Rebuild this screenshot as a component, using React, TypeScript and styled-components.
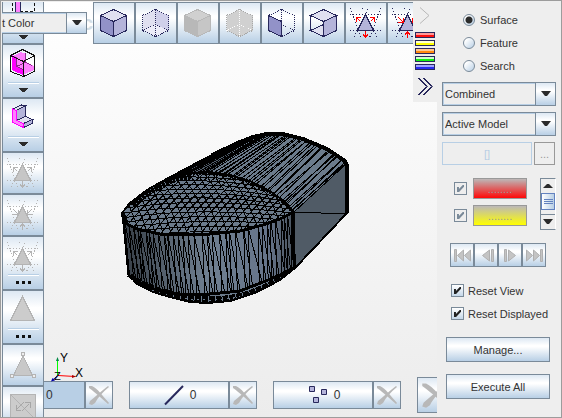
import React, { useState } from "react";
import styled, { createGlobalStyle, css } from "styled-components";

const line = "#7a8a99";
const navy = "#28285c";
const soft = "#b8cfe5";
const ocean = "linear-gradient(#dde8f3 0%, #ffffff 32%, #ffffff 38%, #b8cfe5 100%)";

const GlobalStyle = createGlobalStyle`
  *, *::before, *::after { box-sizing: border-box; }
  body { margin: 0; }
  body, button, input, select {
    font-family: "Liberation Sans", Arial, sans-serif;
    font-size: 11px;
    color: #333;
  }
  svg { display: block; flex: none; }
`;

const Window = styled.div`
  display: grid;
  grid-template-columns: auto minmax(0, 1fr) 124px;
  grid-template-rows: minmax(0, 1fr);
  position: relative;
  height: 100vh;
  border: 1px solid #9c9c9c;
  padding: 1px 0 0 1px;
  background: #eee;
  overflow: hidden;
`;

const SideBar = styled.div`
  display: flex;
  flex-direction: column;
  overflow: hidden;
`;

const ToolButton = styled.button<{ $cut?: boolean }>`
  display: flex;
  align-items: flex-end;
  flex: none;
  width: 42px;
  padding: 0;
  border: 1px solid ${line};
  border-radius: 0;
  background: ${ocean};
  shape-rendering: crispEdges;
  ${(p) => p.$cut && css`border-top: 0;`}
`;

const Viewport = styled.main`
  display: grid;
  grid-template: minmax(0, 1fr) / minmax(0, 1fr);
  position: relative;
  background: linear-gradient(#ffffff, #ececec);
  overflow: hidden;
`;

const Scene = styled.div`
  grid-area: 1 / 1;
  padding: 128px 0 0 74px;
`;

const Overlay = styled.div`
  grid-area: 1 / 1;
  position: relative;
  display: flex;
  flex-direction: column;
  justify-content: space-between;
`;

const TopRow = styled.div`
  display: flex;
  align-items: flex-start;
`;

const Ghost = styled.span`
  width: 49px;
  padding-top: 10px;
  text-align: right;
  font-size: 20px;
  line-height: 23px;
  font-weight: bold;
  color: #d3dee6;
`;

const ToolRow = styled.div`
  display: flex;
  flex: 1;
  min-width: 0;
  overflow: hidden;
`;

const Strip = styled.div`
  display: flex;
  flex-direction: column;
  flex: none;
  width: 24px;
  height: 100px;
  background: #eee;
`;

const StripButton = styled.button`
  padding: 0;
  border: 0;
  background: none;
`;

const CountRow = styled.div`
  display: flex;
  align-items: center;
  gap: 16px;
  height: 36px;
  margin-bottom: 4px;
  overflow: hidden;
`;

const CountGroup = styled.div`
  display: flex;
  flex: none;
`;

const CountButton = styled.button<{ $active?: boolean }>`
  display: flex;
  align-items: center;
  justify-content: center;
  gap: 4px;
  width: 100px;
  height: 28px;
  padding: 0;
  border: 1px solid ${line};
  background: ${ocean};
  font-size: 12px;
  ${(p) =>
    p.$active &&
    css`
      width: 41px;
      justify-content: flex-start;
      padding-left: 2px;
      border-left: 0;
      background: ${soft};
    `}
`;

const ClearButton = styled.button<{ $large?: boolean }>`
  display: flex;
  align-items: center;
  justify-content: center;
  width: ${(p) => (p.$large ? 36 : 28)}px;
  height: ${(p) => (p.$large ? 36 : 28)}px;
  padding: 0;
  border: 1px solid ${line};
  background: ${ocean};
`;

const Triad = styled.svg`
  position: absolute;
  left: 6px;
  bottom: 30px;
`;

const FloatingCombo = styled.div`
  position: absolute;
  left: 1px;
  top: 11px;
  width: 85px;
`;

const ComboBox = styled.div<{ $flush?: boolean }>`
  display: grid;
  grid-template-columns: minmax(0, 1fr) 20px;
  height: ${(p) => (p.$flush ? 22 : 24)}px;
  border: 1px solid ${line};
  ${(p) => p.$flush && css`border-left: 0;`}
`;

const Select = styled.select<{ $flush?: boolean }>`
  grid-area: 1 / 1 / 2 / 3;
  appearance: none;
  width: 100%;
  height: 100%;
  padding: 0 20px 0 ${(p) => (p.$flush ? 0 : 1)}px;
  border: 1px solid ${soft};
  border-radius: 0;
  background: #eee;
  ${(p) => p.$flush && css`border-left: 0;`}
`;

const ComboArrow = styled.span`
  grid-area: 1 / 2;
  display: flex;
  align-items: center;
  justify-content: center;
  border-left: 1px solid ${line};
  background: ${ocean};
  pointer-events: none;
`;

const Panel = styled.aside`
  display: flex;
  flex-direction: column;
  padding: 6px 5px 0;
  background: #eee;
  overflow: hidden;
`;

const Choices = styled.div`
  display: flex;
  flex-direction: column;
  padding-left: 21px;
`;

const ChoiceRow = styled.label<{ $gap?: number }>`
  display: flex;
  align-items: center;
  gap: ${(p) => p.$gap ?? 4}px;
  height: 23px;
`;

const Radio = styled.input`
  appearance: none;
  width: 12px;
  height: 12px;
  margin: 0;
  border: 1px solid ${line};
  border-radius: 50%;
  background: linear-gradient(135deg, #fff 20%, #b8cfe5);
  &:checked {
    background: radial-gradient(circle, #2b2b2b 3px, transparent 4px), linear-gradient(135deg, #fff 20%, #b8cfe5);
  }
`;

const Tick = styled.input`
  appearance: none;
  display: grid;
  place-items: center;
  width: 13px;
  height: 13px;
  margin: 0;
  border: 1px solid ${line};
  background: linear-gradient(#fff, #c4d7e9);
  &:checked::before {
    content: "";
    width: 7px;
    height: 7px;
    background: #222;
    clip-path: polygon(0 30%, 28% 30%, 28% 58%, 82% 0, 100% 0, 100% 26%, 30% 100%, 0 100%);
  }
  &:disabled { background: #eee; }
  &:disabled::before { background: ${line}; }
`;

const Stack = styled.div<{ $top: number; $gap: number }>`
  display: flex;
  flex-direction: column;
  gap: ${(p) => p.$gap}px;
  margin-top: ${(p) => p.$top}px;
`;

const PickRow = styled.div`
  display: flex;
  gap: 2px;
  padding-right: 1px;
`;

const PickButton = styled.button<{ $narrow?: boolean }>`
  flex: ${(p) => (p.$narrow ? "0 0 21px" : "1")};
  height: 23px;
  padding: 0;
  border: 1px solid ${(p) => (p.$narrow ? "#999" : soft)};
  background: #eee;
  color: ${(p) => (p.$narrow ? "#999" : soft)};
`;

const ColorArea = styled.div`
  display: flex;
  justify-content: space-between;
  height: 52px;
  margin-top: 13px;
  padding: 0 0 0 12px;
`;

const ColorList = styled.div`
  display: flex;
  flex-direction: column;
  gap: 6px;
`;

const ColorRow = styled.div`
  display: flex;
  align-items: center;
  gap: 6px;
`;

const Swatch = styled.button<{ $color: string }>`
  width: 54px;
  height: 21px;
  padding: 0;
  border: 1px solid #999;
  background: linear-gradient(#bcb8b8, ${(p) => p.$color});
  color: #999;
`;

const Scroller = styled.div`
  display: flex;
  flex-direction: column;
  width: 16px;
  border: 1px solid ${line};
  border-right-color: #fff;
`;

const ScrollStep = styled.button`
  display: grid;
  place-items: center;
  flex: 1;
  padding: 0;
  border: 0;
  background: #eee;
  &:last-child { border-top: 1px solid ${line}; }
`;

const ScrollThumb = styled.div`
  display: grid;
  place-items: center;
  height: 17px;
  margin-bottom: 4px;
  border: 1px solid #6382bf;
  background: linear-gradient(90deg, #fff, #b8cfe5);
`;

const Transport = styled.div`
  display: flex;
  margin: 13px 0 0 8px;
`;

const TransportButton = styled.button`
  width: 24px;
  height: 24px;
  padding: 0;
  border: 1px solid ${line};
  background: ${ocean};
`;

const ResetList = styled.div`
  margin-top: 12px;
  padding-left: 9px;
  white-space: nowrap;
`;

const PushButton = styled.button`
  height: 25px;
  margin: 0 6px 0 4px;
  padding: 0;
  border: 1px solid ${line};
  background: ${ocean};
`;

const Arrow = ({ up }: { up?: boolean }) => (
  <svg width="10" height="6" viewBox="0 0 10 6">
    <path d={up ? "M0 5h10L6 1H4z" : "M0 0h10L6 5H4z"} fill="#2b2b2b" />
  </svg>
);

const hexagon = "M19.5 6.5 32.5 12.5V27.5L19.5 33.5 6.5 27.5V12.5Z";
const innerEdges = "M19.5 6.5V33.5M6.5 27.5 19.5 21.5 32.5 27.5";

function CubeIcon({ kind }: { kind: "solid" | "hidden" | "graySolid" | "grayHidden" | "left" | "open" }) {
  return (
    <svg width="40" height="40" viewBox="0 0 40 40" fill="none" stroke={navy}>
      {(kind === "solid" || kind === "graySolid") && (
        <g stroke={kind === "solid" ? navy : "#b8b8b8"} strokeLinejoin="round">
          <path d="M19.5 6.5 32.5 12.5 19.5 18.5 6.5 12.5Z" fill={kind === "solid" ? "#e0e0f0" : "#d0d0d0"} />
          <path d="M6.5 12.5 19.5 18.5V33.5L6.5 27.5Z" fill={kind === "solid" ? "#9292c8" : "#b8b8b8"} />
          <path d="M32.5 12.5 19.5 18.5V33.5L32.5 27.5Z" fill={kind === "solid" ? "#b4b4da" : "#c6c6c6"} />
        </g>
      )}
      {kind === "hidden" && (
        <g stroke="none">
          <path d={hexagon} fill="#e0e0f0" />
          <path d="M19.5 6.5 32.5 12.5V27.5L19.5 21.5Z" fill="#d0d0ea" />
          <path d="M6.5 27.5 19.5 21.5 32.5 27.5 19.5 33.5Z" fill="#ececf8" />
        </g>
      )}
      {kind === "grayHidden" && <path d={hexagon} fill="#d0d0d0" stroke="none" />}
      {kind === "hidden" && <path d={hexagon + innerEdges} strokeDasharray="1 1" />}
      {kind === "grayHidden" && (
        <g strokeDasharray="1 1">
          <path d={hexagon} stroke="#a8a8a8" />
          <path d={innerEdges} stroke="#fff" />
        </g>
      )}
      {kind === "left" && (
        <g>
          <path d={hexagon + innerEdges} strokeDasharray="1 1" />
          <path d="M6.5 12.5 19.5 18.5V33.5L6.5 27.5Z" fill="#9292c8" />
        </g>
      )}
      {kind === "open" && (
        <g>
          <path d="M6.5 27.5 19.5 21.5V33.5Z" fill="#e0e0f0" />
          <path d="M6.5 12.5 19.5 6.5 32.5 12.5 19.5 18.5Z" fill="#e0e0f0" />
          <path d="M32.5 12.5 19.5 18.5V33.5L32.5 27.5Z" fill="#b4b4da" />
          <path d="M6.5 12.5V27.5L19.5 33.5" />
        </g>
      )}
    </svg>
  );
}

function MenuMark({ dots }: { dots?: boolean }) {
  return (
    <g stroke="none">
      <path d="M5 37h31v1H5z" fill={soft} />
      <path d="M5 38h31v1H5z" fill="#fff" />
      {dots ? (
        <path d="M13 44h3v3h-3zM19 44h3v3h-3zM25 44h3v3h-3z" fill="#111" />
      ) : (
        <path d="M16 43h9l-3 4h-3z" fill="#2b2b2b" />
      )}
    </g>
  );
}

function RefineIcon({ inward, gray, menu }: { inward?: boolean; gray?: boolean; menu?: boolean }) {
  const ink = gray ? "#b4b4b4" : navy;
  const h = menu ? 52 : 40;
  return (
    <svg width="40" height={h} viewBox={`0 0 40 ${h}`} fill="none" stroke={ink}>
      <path
        d="M4 11.5H35M4 27.5H35M16.5 5 19.5 11.5 22.5 5M4.5 5 15.5 35M34.5 5 23.5 35M11.5 27.5 7.5 35M27.5 27.5 31.5 35"
        strokeDasharray="1 2"
      />
      <path d="M19.5 11.5 27.5 27.5H11.5Z" fill={gray ? "#c6c6c6" : "#b4b4da"} />
      <path
        d={
          inward
            ? "M10 14 15 19M15 15V19.5H10M29 14 24 19M24 15V19.5H29M19.5 35V29M17 31.5 19.5 29 22 31.5"
            : "M14.5 18.5 10.5 14.5M10.5 19V14.5H15M24.5 18.5 28.5 14.5M24 14.5H28.5V19M19.5 28V34M17 31.5 19.5 34 22 31.5"
        }
        stroke={gray ? "#b4b4b4" : "#f00"}
      />
      {menu && <MenuMark dots />}
    </svg>
  );
}

const BarIcon = () => (
  <svg width="40" height="41" viewBox="0 -1 40 41" fill="none">
    <path d="M9.5 0V8M17 8H31.5V0" stroke="#111" strokeDasharray="3 2" />
    <path d="M12.5-2V28H17.5V-2" fill="#ff80ff" stroke="#28285c" />
    <path d="M16 32h9l-3 4h-3z" fill="#2b2b2b" />
  </svg>
);

const BoxedPartIcon = () => (
  <svg width="40" height="52" viewBox="0 0 40 52" fill="none" stroke="#111">
    <path d="M9.5 11 18 7 22 8.5V17L31 21V25L20 30 9.5 25Z" fill="#ff80ff" stroke="none" />
    <path d="M9 10 13.5 12.5V21.5L20 24.5V30L9 25Z" fill="#f0f" stroke="none" />
    <path d="M13.5 12V21.5L20.5 24.5M13.5 21.5 22.5 17.5 29.5 20.5M22.5 8V17" stroke="#8c2a8c" />
    <path d="M19.5 4.5 31.5 10.5V26.5L20.5 31.5 7.5 26.5V10.5ZM7.5 10.5 20.5 16.5 31.5 10.5M20.5 16.5V31.5" />
    <MenuMark />
  </svg>
);

const PartIcon = () => (
  <svg width="40" height="52" viewBox="0 0 40 52" fill="none" stroke={navy}>
    <path d="M9.5 10 18.5 6 22.5 6.5 13.5 11.5Z" fill="#e0e0f0" />
    <path d="M13.5 11.5 22.5 6.5V17.5L13.5 21.5Z" fill="#b4b4da" />
    <path d="M13.5 21.5 22.5 17.5 29.5 20.5 20.5 24.5Z" fill="#e0e0f0" />
    <path d="M20.5 24.5 29.5 20.5V24.5L20.5 28.5Z" fill="#b4b4da" />
    <path d="M9.5 10 13.5 11.5V21.5L20.5 24.5V28.5L9.5 23.5Z" fill="#ff80ff" stroke="#f0f" />
    <MenuMark />
  </svg>
);

const TriangleIcon = () => (
  <svg width="40" height="52" viewBox="0 0 40 52">
    <path d="M19.5 5.5 31.5 29.5H7.5Z" fill="#ccc" stroke="#b4b4b4" />
    <MenuMark dots />
  </svg>
);

const VertexIcon = () => (
  <svg width="40" height="40" viewBox="0 0 40 40" fill="#c8c8c8" stroke="#b4b4b4">
    <path d="M20 11 29.5 30.5H10.5Z" />
    <path d="M18.5 7.5h3v3h-3zM7.5 29.5h3v3h-3zM29.5 29.5h3v3h-3z" fill="#eee" />
  </svg>
);

const SwapIcon = () => (
  <svg width="40" height="40" viewBox="0 0 40 40" fill="none" stroke="#b4b4b4">
    <path d="M7.5 7.5h25v25h-25z" fill="#ccc" />
    <path d="M8 8 32 32" />
    <path d="M14 22 21 15M13.5 18V23.5H18M19 24 26 17M22 15.5H27.5V21" stroke="#a6a6a6" />
  </svg>
);

const CrossIcon = ({ size = 22 }: { size?: number }) => (
  <svg width={size} height={size} viewBox="0 0 22 22" fill="#b8b8b8">
    <path d="M1 2H4C10 5 14 11 21 19L20 20C12 13 8 9 1 4Z" />
    <path d="M20 2 21 3C15 8 10 13 7 19L4 21 1 20 2 17C7 13 13 7 20 2Z" />
  </svg>
);

const bars = [
  ["#ff1010", "#ff9a9a"],
  ["#ffff00", "#ffffd0"],
  ["#ff8a10", "#ffc890"],
  ["#10f010", "#d0ffd0"],
  ["#2828f0", "#a0a0ff"],
];

const BarsIcon = () => (
  <svg width="24" height="42" viewBox="0 0 24 42">
    {bars.map(([deep, pale], i) => (
      <g key={deep}>
        <rect x="2.5" y={2.5 + i * 8} width="19" height="5" fill={deep} stroke={navy} />
        <rect x="3" y={3 + i * 8} width="18" height="2" fill={pale} />
      </g>
    ))}
  </svg>
);

const transportShapes = [
  { name: "First", d: "M3.5 5.5h2v12h-2zM12.5 6v11L6.5 11.5ZM19.5 6v11l-6-5.5Z" },
  { name: "Previous", d: "M14.5 6v11L7.5 11.5ZM16.5 5.5h2v12h-2z" },
  { name: "Next", d: "M5.5 5.5h2v12h-2zM9.5 6v11l7-5.5Z" },
  { name: "Last", d: "M3.5 6v11l6-5.5ZM10.5 6v11l6-5.5ZM17.5 5.5h2v12h-2z" },
];

type Pt = [number, number];

/* Point at parameter t (0..1) along a polyline whose knots are evenly spaced in t. */
function along(pts: Pt[], t: number): Pt {
  const s = Math.min(Math.max(t, 0), 0.9999) * (pts.length - 1);
  const i = Math.floor(s);
  const f = s - i;
  const [a, b] = [pts[i], pts[i + 1]];
  return [a[0] + (b[0] - a[0]) * f, a[1] + (b[1] - a[1]) * f];
}

/* Height of a polyline at a given x. */
function heightAt(pts: Pt[], x: number): number {
  for (let i = 0; i < pts.length - 1; i++) {
    const [a, b] = [pts[i], pts[i + 1]];
    if (x <= b[0]) return a[1] + ((b[1] - a[1]) * (x - a[0])) / (b[0] - a[0]);
  }
  return pts[pts.length - 1][1];
}

const noise = (n: number) => {
  const v = Math.sin(n * 127.1 + 11.7) * 43758.5453;
  return v - Math.floor(v);
};
const seg = (a: Pt, b: Pt) => `M${a[0].toFixed(1)} ${a[1].toFixed(1)}L${b[0].toFixed(1)} ${b[1].toFixed(1)}`;
const poly = (pts: Pt[]) => pts.map((p) => p.join(",")).join(" ");

const outline: Pt[] = [
  [122, 213], [130, 203], [147, 190], [163, 181], [187, 168], [212, 155], [240, 142], [253, 137], [267, 134],
  [283, 134], [303, 139], [327, 149], [345, 161], [347, 166], [347, 213], [295, 268], [280, 280], [257, 292],
  [230, 301], [207, 303], [190, 302], [170, 297], [153, 292], [137, 284], [129, 275], [126, 242],
];
const rimFront: Pt[] = [
  [122, 213], [127, 224], [137, 229], [160, 234], [183, 235], [210, 234], [240, 231], [263, 225], [280, 219], [294, 212],
];
const rimBack: Pt[] = [
  [294, 212], [285, 202], [270, 191], [250, 181], [230, 175], [210, 172], [190, 173], [172, 177], [147, 190], [130, 203],
];
const base: Pt[] = [
  [128, 275], [137, 282], [150, 288], [170, 293], [190, 295], [210, 294], [240, 291], [263, 282], [280, 275], [295, 267],
];
const ruleFront: Pt[] = [[146, 190], [172, 177], [190, 173], [210, 173], [230, 175], [250, 181], [270, 191], [285, 202], [294, 212]];
const ruleBack: Pt[] = [[232, 146], [245, 140], [258, 135], [272, 133], [285, 134], [301, 138], [318, 144], [333, 153], [345, 164]];

/* Triangle strip between the two rims: uprights with a slanted diagonal in each bay. */
function buildMesh() {
  const stops: number[] = [];
  for (let x = 124, i = 0; x < 293; i++) {
    stops.push(x);
    const middle = x > 190 && x < 262;
    x += middle ? 3 + noise(i) * 7 : 2 + noise(i) * 4;
  }
  let wall = "";
  stops.forEach((x, i) => {
    const foot = (v: number): Pt => {
      const bx = Math.min(v + 5 * (1 - (v - 123) / 170), 294);
      return [bx, heightAt(base, bx)];
    };
    const top: Pt = [x, heightAt(rimFront, x)];
    wall += seg(top, foot(x));
    const next = stops[i + 1];
    if (next) wall += seg(top, foot(next + 3));
  });
  let roof = "";
  for (let i = 0; i < 50; i++) {
    const t = (i + noise(i + 200) * 0.9) / 50;
    roof += seg(along(ruleFront, t), along(ruleBack, t + (i % 2 ? 0.01 : noise(i + 9) * 0.05)));
  }
  let dome = "";
  for (let k = 0; k < 15; k++) {
    const f = k / 14;
    const y = 175 + 56 * Math.pow(f, 1.15);
    dome += `M118 ${(y + 6 + 6 * f).toFixed(1)}Q200 ${(y - 12 + 14 * f).toFixed(1)} 298 ${(y + 14 - 8 * f).toFixed(1)}`;
  }
  for (let k = 0; k < 30; k++) {
    const x = 78 + k * 8;
    dome += `M${x} 238Q${x + 18} 210 ${x + 66} 170`;
    dome += `M${x + 14} 238Q${x + 8} 206 ${x - 20} 170`;
  }
  return { wall, roof, dome };
}
const mesh = buildMesh();

const Model = () => (
  <svg width="232" height="178" viewBox="118 130 232 178" shapeRendering="crispEdges" fill="none" stroke="#000">
    <defs>
      <linearGradient id="wallShade" x1="0" x2="1" y1="0" y2="0">
        <stop offset="0" stopColor="#353c44" />
        <stop offset="0.3" stopColor="#5c6977" />
        <stop offset="0.5" stopColor="#6f7f90" />
        <stop offset="0.85" stopColor="#66748a" />
        <stop offset="1" stopColor="#48525c" />
      </linearGradient>
      <clipPath id="domeClip">
        <polygon points={poly([...rimFront, ...rimBack])} />
      </clipPath>
      <clipPath id="bodyClip">
        <polygon points={poly(outline)} />
      </clipPath>
    </defs>
    <polygon points={poly(outline)} fill="#6b7b8c" />
    <path d={mesh.roof} />
    <polygon points={poly([...ruleFront.slice(0, 4), ...ruleBack.slice(0, 2).reverse()])} fill="#000" fillOpacity="0.25" stroke="none" />
    <polygon points={poly([[294, 212], [345, 165], [347, 213], [295, 268]])} fill="#505b66" />
    <path d="M294 212 347 214" />
    <polygon points={poly([...rimFront, ...[...base].reverse()])} fill="url(#wallShade)" />
    <path d={mesh.wall} />
    <g clipPath="url(#domeClip)">
      <polygon points={poly([...rimFront, ...rimBack])} fill="#6b7b8c" />
      <path d={mesh.dome} />
      <polyline points={poly(rimBack)} strokeWidth="5" strokeDasharray="2 1" />
      <polyline points={poly(rimBack.slice(6))} strokeWidth="12" strokeDasharray="3 1" />
    </g>
    <g clipPath="url(#bodyClip)">
      <path d="M129 277Q160 297 205 300T295 270" strokeWidth="8" strokeDasharray="6 1" />
      <path d="M150 291Q170 299 205 300T270 286" stroke="#6b7b8c" strokeDasharray="2 4" />
    </g>
    <polyline points={poly(rimFront)} strokeWidth="3" />
    <polyline points={poly(rimBack.slice(0, 8))} strokeWidth="2" />
    <polyline points={poly(base)} strokeWidth="3" />
    <polyline points={poly([[294, 212], [293, 240], [295, 268]])} strokeWidth="3" />
    <polygon points={poly(outline)} strokeWidth="2" />
    <polyline points={poly(outline.slice(5, 15))} strokeWidth="4" />
  </svg>
);

const radios = ["Surface", "Feature", "Search"];

export default function App() {
  const [mode, setMode] = useState("Surface");
  const [view, setView] = useState(true);
  const [displayed, setDisplayed] = useState(true);
  return (
    <>
      <GlobalStyle />
      <Window>
        <SideBar>
          <ToolButton $cut aria-label="Section"><BarIcon /></ToolButton>
          <ToolButton aria-label="Boxed part"><BoxedPartIcon /></ToolButton>
          <ToolButton aria-label="Part"><PartIcon /></ToolButton>
          <ToolButton aria-label="Grow" disabled><RefineIcon gray /></ToolButton>
          <ToolButton aria-label="Shrink" disabled><RefineIcon gray inward /></ToolButton>
          <ToolButton aria-label="Grow options"><RefineIcon gray menu /></ToolButton>
          <ToolButton aria-label="Triangle"><TriangleIcon /></ToolButton>
          <ToolButton aria-label="Vertices" disabled><VertexIcon /></ToolButton>
          <ToolButton aria-label="Swap edge" disabled><SwapIcon /></ToolButton>
        </SideBar>

        <Viewport>
          <Scene><Model /></Scene>
          <Overlay>
            <TopRow>
              <Ghost>c</Ghost>
              <ToolRow>
                <ToolButton aria-label="Shaded"><CubeIcon kind="solid" /></ToolButton>
                <ToolButton aria-label="Transparent"><CubeIcon kind="hidden" /></ToolButton>
                <ToolButton aria-label="Shaded off" disabled><CubeIcon kind="graySolid" /></ToolButton>
                <ToolButton aria-label="Transparent off" disabled><CubeIcon kind="grayHidden" /></ToolButton>
                <ToolButton aria-label="Single face"><CubeIcon kind="left" /></ToolButton>
                <ToolButton aria-label="Open face"><CubeIcon kind="open" /></ToolButton>
                <ToolButton aria-label="Expand"><RefineIcon /></ToolButton>
                <ToolButton aria-label="Contract"><RefineIcon inward /></ToolButton>
              </ToolRow>
              <Strip>
                <StripButton aria-label="Expand panel" disabled>
                  <svg width="24" height="28" viewBox="0 0 24 28" fill="none" stroke="#b8b8b8">
                    <path d="M7 5.5 16 13.5 7 21.5" strokeWidth="1" />
                  </svg>
                </StripButton>
                <StripButton aria-label="Colors"><BarsIcon /></StripButton>
                <StripButton aria-label="Collapse panel">
                  <svg width="24" height="28" viewBox="0 0 24 28" fill="none" stroke={navy} strokeWidth="1">
                    <path d="M5 6 13.5 14.5 5 23M10 6 18.5 14.5 10 23M6 6 14.5 14.5 6 23M11 6 19.5 14.5 11 23" />
                  </svg>
                </StripButton>
              </Strip>
            </TopRow>

            <Triad width="38" height="36" viewBox="50 351 38 36" fontSize="12" fontFamily="Liberation Sans, Arial, sans-serif">
              <path d="M57.5 375V359" stroke="#0f0" />
              <path d="M57.5 357 59 361H56Z" fill="#084" />
              <path d="M58 375.5 75 376.5" stroke="#f00" />
              <path d="M76 376.5 72 375V378Z" fill="#a00" />
              <path d="M58 375.5 52 380.5" stroke="#00f" />
              <path d="M51 381.5 52.5 378 55 380.5Z" fill="#00a" />
              <text x="60" y="362">Y</text>
              <text x="75" y="377">X</text>
              <text x="54" y="380" fontSize="11">Z</text>
            </Triad>

            <CountRow>
              <CountGroup>
                <CountButton $active>0</CountButton>
                <ClearButton aria-label="Clear faces" disabled><CrossIcon /></ClearButton>
              </CountGroup>
              <CountGroup>
                <CountButton>
                  <svg width="24" height="22" viewBox="0 0 24 22"><path d="M3 20.5 21 2" stroke={navy} strokeWidth="2" /></svg>
                  0
                </CountButton>
                <ClearButton aria-label="Clear edges" disabled><CrossIcon /></ClearButton>
              </CountGroup>
              <CountGroup>
                <CountButton>
                  <svg width="24" height="22" viewBox="0 0 24 22" fill="#b4b4da" stroke={navy}>
                    <path d="M3.5 2.5h5v5h-5zM15.5 5.5h5v5h-5zM7.5 13.5h5v5h-5z" />
                  </svg>
                  0
                </CountButton>
                <ClearButton aria-label="Clear points" disabled><CrossIcon /></ClearButton>
              </CountGroup>
              <CountGroup>
                <ClearButton $large aria-label="Clear all" disabled><CrossIcon size={28} /></ClearButton>
              </CountGroup>
            </CountRow>
          </Overlay>
        </Viewport>

        <Panel>
          <Choices>
            {radios.map((name) => (
              <ChoiceRow key={name} $gap={5}>
                <Radio type="radio" name="mode" checked={mode === name} onChange={() => setMode(name)} />
                {name}
              </ChoiceRow>
            ))}
          </Choices>
          <Stack $top={5} $gap={6}>
            <ComboBox>
              <Select aria-label="Method"><option>Combined</option></Select>
              <ComboArrow><Arrow /></ComboArrow>
            </ComboBox>
            <ComboBox>
              <Select aria-label="Target"><option>Active Model</option></Select>
              <ComboArrow><Arrow /></ComboArrow>
            </ComboBox>
            <PickRow>
              <PickButton disabled>[]</PickButton>
              <PickButton $narrow disabled>...</PickButton>
            </PickRow>
          </Stack>
          <ColorArea>
            <ColorList>
              <ColorRow>
                <Tick type="checkbox" aria-label="Use red" defaultChecked disabled />
                <Swatch $color="#ff0808" disabled>........</Swatch>
              </ColorRow>
              <ColorRow>
                <Tick type="checkbox" aria-label="Use yellow" defaultChecked disabled />
                <Swatch $color="#ffff00" disabled>........</Swatch>
              </ColorRow>
            </ColorList>
            <Scroller>
              <ScrollStep aria-label="Scroll up"><Arrow up /></ScrollStep>
              <ScrollThumb>
                <svg width="9" height="6" viewBox="0 0 9 6"><path d="M0 .5H9M0 2.5H9M0 4.5H9" stroke="#6382bf" /></svg>
              </ScrollThumb>
              <ScrollStep aria-label="Scroll down"><Arrow /></ScrollStep>
            </Scroller>
          </ColorArea>
          <Transport>
            {transportShapes.map((s) => (
              <TransportButton key={s.name} aria-label={s.name} disabled>
                <svg width="22" height="22" viewBox="0 0 22 22"><path d={s.d} fill="#c4c4c4" stroke="#b0b0b0" /></svg>
              </TransportButton>
            ))}
          </Transport>
          <ResetList>
            <ChoiceRow>
              <Tick type="checkbox" checked={view} onChange={() => setView(!view)} />
              Reset View
            </ChoiceRow>
            <ChoiceRow>
              <Tick type="checkbox" checked={displayed} onChange={() => setDisplayed(!displayed)} />
              Reset Displayed
            </ChoiceRow>
          </ResetList>
          <Stack $top={12} $gap={12}>
            <PushButton>Manage...</PushButton>
            <PushButton>Execute All</PushButton>
          </Stack>
        </Panel>

        <FloatingCombo>
          <ComboBox $flush>
            <Select $flush aria-label="Color source"><option>t Color</option></Select>
            <ComboArrow><Arrow /></ComboArrow>
          </ComboBox>
        </FloatingCombo>
      </Window>
    </>
  );
}
